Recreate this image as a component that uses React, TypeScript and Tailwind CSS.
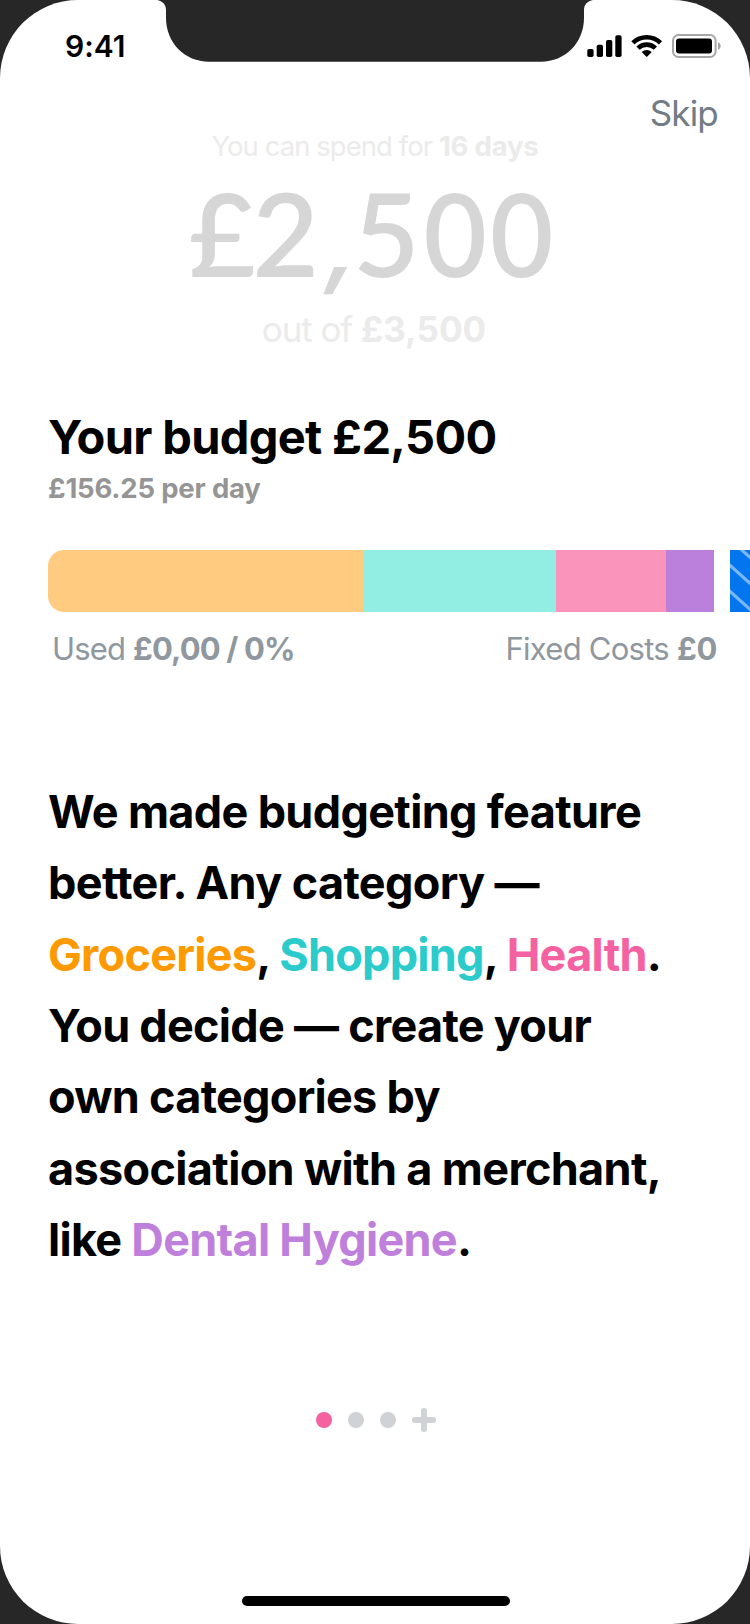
const segments = [
  { name: "Groceries", className: "w-[316px] rounded-l-2xl bg-[#ffcb80]" },
  { name: "Shopping", className: "w-[192px] bg-[#92eee3]" },
  { name: "Health", className: "w-[110px] bg-[#fb94ba]" },
  { name: "Dental Hygiene", className: "w-[48px] bg-[#bb80db]" },
];

function Notch() {
  return (
    <svg className="absolute left-[157px] top-0" width="436" height="62" viewBox="0 0 436 62" fill="#272727">
      <path d="M-1 0C5 0.5 9 4.500 9 10V18C9 43 28 61.700 52 61.700H384C408 61.700 427 43 427 18V10C427 4.500 431 0.500 437 0Z" />
    </svg>
  );
}

function StatusIcons() {
  return (
    <svg width="136" height="26" viewBox="586 33 136 26">
      <rect x="587.3" y="49" width="6.300" height="8" rx="1.800" />
      <rect x="596.7" y="44.700" width="6.300" height="12.300" rx="1.800" />
      <rect x="606" y="40" width="6.300" height="17" rx="1.800" />
      <rect x="615.3" y="35.300" width="6.300" height="21.700" rx="1.800" />
      <g fill="none" stroke="#000" strokeWidth="4.600">
        <path d="M632.900 42.900A19.800 19.800 0 0 1 660.500 42.900" />
        <path d="M638 48.200A12.300 12.300 0 0 1 655.400 48.200" />
      </g>
      <path d="M641.700 51.900C644.500 49.200 648.900 49.200 651.700 51.900L647.300 56.400Q646.700 57 646.100 56.400Z" />
      <rect x="673" y="35" width="42.600" height="22" rx="5.500" fill="none" stroke="#a6a6a6" strokeWidth="2" />
      <rect x="676" y="38.500" width="36" height="15" rx="3" />
      <path d="M718 42V50C721.600 48.500 721.600 43.500 718 42Z" fill="#a6a6a6" />
    </svg>
  );
}

export default function App() {
  return (
    <div className="h-[1624px] w-[750px] overflow-hidden bg-[#272727] font-['Inter',sans-serif] [font-feature-settings:'calt'_0,'liga'_0]">
      <main className="relative flex h-full flex-col rounded-[78px] bg-white">
        <Notch />
        <div className="flex h-[93px] shrink-0 items-start justify-between pl-[65px] pr-[28px] pt-[33px]">
          <span className="text-[30px] font-semibold leading-[26px] text-black">9:41</span>
          <StatusIcons />
        </div>
        <div className="flex justify-end pr-[32px]">
          <button className="h-10 text-[35px] leading-10 tracking-[-0.8px] text-[#727c85]">Skip</button>
        </div>

        <section className="flex flex-col items-center text-[#ebebeb]">
          <p className="relative top-px whitespace-nowrap text-[27.5px] font-normal leading-[25px] tracking-[-0.95px]">
            You can spend for <b className="font-bold tracking-[-0.2px]">16 days</b>
          </p>
          <p className="mt-[14px] flex h-[120px] items-baseline pr-[14px] font-['Lato',sans-serif] text-[115px] font-semibold leading-[121px] text-[#d6d6d6]">
            <span className="flex w-[68px] justify-center">£</span>
            <span className="flex w-[59.4px] justify-center">2</span>
            <span className="flex w-[41.2px] translate-x-[10px] -skew-x-[14deg] justify-center font-['Inter',sans-serif] text-[90px] font-bold">,</span>
            <span className="flex w-[57.4px] translate-x-px justify-center">5</span>
            <span className="flex w-[82.4px] scale-x-95 justify-center">0</span>
            <span className="flex w-[51.6px] scale-x-95 justify-center">0</span>
          </p>
          <p className="mt-[17px] whitespace-nowrap pr-[2px] text-[35px] font-normal leading-10 tracking-[-1.1px]">
            out of <b className="font-bold tracking-[0px]">£3,500</b>
          </p>
        </section>

        <section className="mt-[60px] pl-12">
          <h1 className="whitespace-nowrap text-[47px] font-bold leading-[56px] tracking-[-0.67px] text-black">Your budget £2,500</h1>
          <p className="mt-[7px] whitespace-nowrap text-[27.5px] font-bold leading-8 tracking-[-0.18px] text-[#959595]">£156.25 per day</p>
          <div className="mt-[46px] flex h-[62px] overflow-hidden">
            {segments.map((s) => (
              <div key={s.name} className={`shrink-0 ${s.className}`} />
            ))}
            <svg className="ml-4 shrink-0" width="20" height="62" viewBox="0 0 20 62">
              <rect width="20" height="62" fill="#0375ef" />
              <path d="M-6 -16L34 20M-6 10L34 46M-6 36L34 72" stroke="#7ab7f6" strokeWidth="3.2" />
            </svg>
          </div>
          <div className="mt-[17px] flex justify-between whitespace-nowrap pl-1 pr-[33px] text-[31px] leading-10 text-[#8f979f]">
            <p className="font-normal tracking-[-0.85px]">
              Used <b className="font-bold">£0,00 / 0%</b>
            </p>
            <p className="font-normal tracking-[-0.75px]">
              Fixed Costs <b className="font-bold tracking-[-0.3px]">£0</b>
            </p>
          </div>
        </section>

        <section className="mt-[107px] flex flex-col items-start whitespace-nowrap pl-12 text-[45px] font-bold leading-[71.33px] tracking-[-0.72px] text-black">
          <span className="tracking-[-0.66px]">We made budgeting feature</span>
          <span className="tracking-[-0.64px]">better. Any category —</span>
          <span>
            <span className="text-[#ff9900]">Groceries</span>, <span className="text-[#2bcbcb]">Shopping</span>,{" "}
            <span className="text-[#f562a2]">Health</span>.
          </span>
          <span>You decide — create your</span>
          <span>own categories by</span>
          <span className="tracking-[-0.66px]">association with a merchant,</span>
          <span>
            like <span className="text-[#bf80dc]">Dental Hygiene</span>.
          </span>
        </section>

        <nav className="mt-[133px] flex h-6 items-center gap-4 pl-[316px]">
          <i className="size-4 rounded-full bg-[#f562a2]" />
          <i className="size-4 rounded-full bg-[#cfd3d6]" />
          <i className="size-4 rounded-full bg-[#cfd3d6]" />
          <svg width="24" height="24" viewBox="0 0 24 24" stroke="#cfd3d6" strokeWidth="6" strokeLinecap="round">
            <path d="M12 3V21M3 12H21" />
          </svg>
        </nav>
        <div className="mb-[18px] ml-[242px] mt-auto h-[10px] w-[268px] rounded-full bg-black" />
      </main>
    </div>
  );
}
